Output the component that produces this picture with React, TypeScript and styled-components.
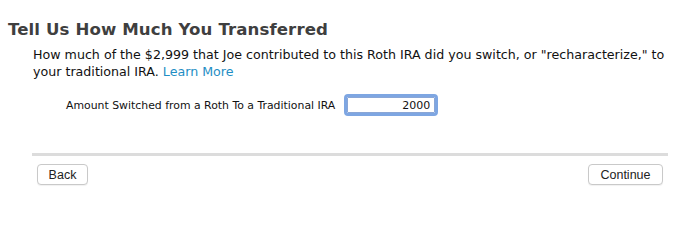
import styled, { createGlobalStyle } from 'styled-components';

const GlobalStyle = createGlobalStyle`
  html, body {
    margin: 0;
    padding: 0;
    background: #ffffff;
  }
`;

const Page = styled.div`
  width: 692px;
  height: 242px;
  box-sizing: border-box;
  padding: 18px 24px 0 8px;
  font-family: 'DejaVu Sans', 'Liberation Sans', sans-serif;
  color: #111;
`;

const Title = styled.h1`
  margin: 0;
  font-size: 16.6px;
  line-height: 24px;
  font-weight: bold;
  color: #3f3f3f;
  letter-spacing: 0.1px;
`;

const Body = styled.div`
  padding-left: 25px;
`;

const Intro = styled.p`
  margin: 4px 0 0;
  font-size: 12.65px;
  line-height: 17px;
  color: #111;
`;

const LearnMore = styled.a`
  color: #1f8ec4;
  text-decoration: none;
  cursor: pointer;
`;

const FieldRow = styled.div`
  display: flex;
  align-items: center;
  gap: 12px;
  margin: 17px 0 0 33px;
`;

const FieldLabel = styled.label`
  font-size: 10.88px;
  color: #111;
`;

const AmountInput = styled.input`
  width: 78px;
  height: 14px;
  box-sizing: content-box;
  padding: 0 4px;
  border: 1px solid #8aa6d6;
  outline: 3px solid #7ea6e2;
  outline-offset: 0;
  border-radius: 1px;
  font-family: 'DejaVu Sans', sans-serif;
  font-size: 11px;
  text-align: right;
  color: #111;
`;

const Divider = styled.hr`
  margin: 40px 0 0 -1px;
  border: 0;
  height: 3px;
  background: #dcdcdc;
`;

const Actions = styled.div`
  display: flex;
  justify-content: space-between;
  padding: 8px 5px 0 4px;
`;

const NavButton = styled.button<{ $width: number }>`
  width: ${(p) => p.$width}px;
  height: 21px;
  box-sizing: border-box;
  background: #ffffff;
  border: 1px solid #c9c9c9;
  border-radius: 4px;
  box-shadow: 0 1px 1px rgba(0, 0, 0, 0.06);
  font-family: 'Liberation Sans', Arial, sans-serif;
  font-size: 12.5px;
  color: #222;
  padding: 0;
`;

export default function App() {
  return (
    <Page>
      <GlobalStyle />
      <Title>Tell Us How Much You Transferred</Title>
      <Body>
        <Intro>
          How much of the $2,999 that Joe contributed to this Roth IRA did you switch, or
          "recharacterize," to your traditional IRA. <LearnMore>Learn More</LearnMore>
        </Intro>
        <FieldRow>
          <FieldLabel htmlFor="amount">Amount Switched from a Roth To a Traditional IRA</FieldLabel>
          <AmountInput id="amount" defaultValue="2000" />
        </FieldRow>
        <Divider />
        <Actions>
          <NavButton $width={51}>Back</NavButton>
          <NavButton $width={75}>Continue</NavButton>
        </Actions>
      </Body>
    </Page>
  );
}
